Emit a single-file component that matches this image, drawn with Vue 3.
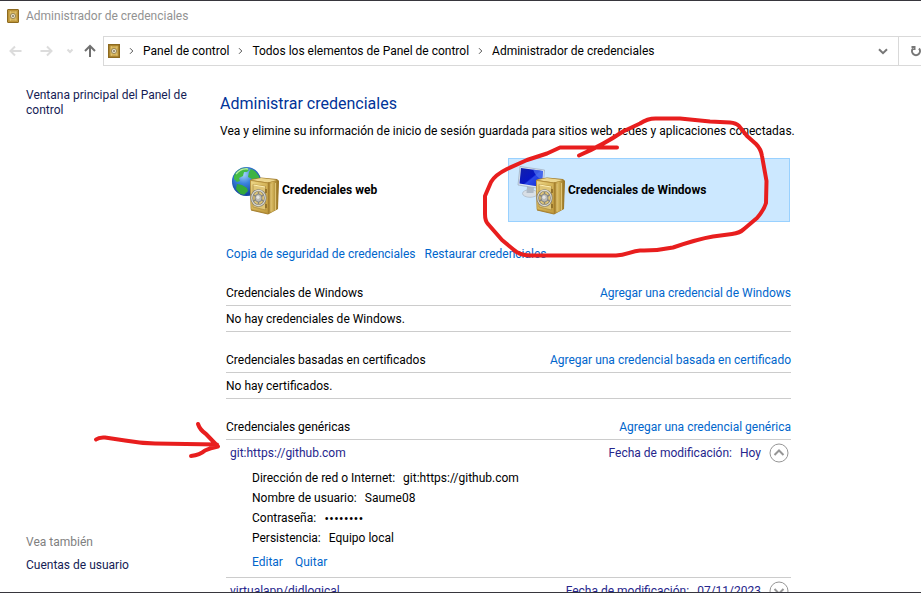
<script setup>
import { ref } from 'vue'

const crumbs = ['Panel de control', 'Todos los elementos de Panel de control', 'Administrador de credenciales']
const selected = ref('windows')
const tiles = [
  { id: 'web', label: 'Credenciales web' },
  { id: 'windows', label: 'Credenciales de Windows' }
]
const emptySections = [
  { title: 'Credenciales de Windows', add: 'Agregar una credencial de Windows', text: 'No hay credenciales de Windows.' },
  { title: 'Credenciales basadas en certificados', add: 'Agregar una credencial basada en certificado', text: 'No hay certificados.' }
]
const credentials = ref([
  {
    name: 'git:https://github.com',
    modified: 'Hoy',
    open: true,
    details: [
      { label: 'Dirección de red o Internet:', value: 'git:https://github.com' },
      { label: 'Nombre de usuario:', value: 'Saume08' },
      { label: 'Contraseña:', value: '••••••••', secret: true },
      { label: 'Persistencia:', value: 'Equipo local' }
    ]
  },
  { name: 'virtualapp/didlogical', modified: '07/11/2023', open: false, details: [] }
])
</script>

<template>
  <div class="window">
    <svg width="0" height="0" class="defs" aria-hidden="true">
      <defs>
        <linearGradient id="gold" x1="0" y1="0" x2="1" y2="1">
          <stop offset="0" stop-color="#efd98a" /><stop offset=".5" stop-color="#d4b458" /><stop offset="1" stop-color="#c09a3c" />
        </linearGradient>
        <linearGradient id="goldSide" x1="0" y1="0" x2="1" y2="0">
          <stop offset="0" stop-color="#9c7524" /><stop offset=".4" stop-color="#d5b65c" /><stop offset="1" stop-color="#94701f" />
        </linearGradient>
        <radialGradient id="sea" cx=".4" cy=".25" r=".8">
          <stop offset="0" stop-color="#a5d5fa" /><stop offset=".4" stop-color="#3b83dc" /><stop offset="1" stop-color="#0c3693" />
        </radialGradient>
        <linearGradient id="screen" x1="0" y1="0" x2="1" y2="1">
          <stop offset="0" stop-color="#1220a8" /><stop offset=".5" stop-color="#0716c4" /><stop offset=".55" stop-color="#2a49e8" /><stop offset="1" stop-color="#1128d0" />
        </linearGradient>
        <symbol id="vault" viewBox="0 0 12 14">
          <rect x=".5" y=".5" width="11" height="13" rx=".5" fill="#c49a38" stroke="#8d6a20" />
          <rect x="2" y="2" width="8" height="10" fill="#d8b65c" stroke="#b08a38" stroke-width=".7" />
          <circle cx="6" cy="7" r="2.600" fill="#e9e0c4" stroke="#8a7748" stroke-width=".8" />
          <circle cx="6" cy="7" r="1.100" fill="#8b8069" />
          <path d="M3 3h1M8.500 3h1M3 11h1M8.500 11h1" stroke="#f5df95" stroke-width=".7" />
        </symbol>
        <symbol id="safe" viewBox="0 0 49 49">
          <path d="M19 14.500Q19 13.500 21 13L30 11.500 46 13 48 15 47 43 37 48.500 20 44.500Z" fill="#a17c2c" />
          <path d="M20 14 30 12l16 2-9 2.500Z" fill="#ecd68d" />
          <path d="M37 16.500 47.500 14.500 46.500 43 37 48Z" fill="url(#goldSide)" />
          <path d="M19.500 14.500 37 17v30.500L20 43.500Z" fill="url(#gold)" stroke="#b08a38" stroke-width=".7" />
          <path d="M22 18.500 34.500 20.500v23.500L22 41Z" fill="#dfc576" stroke="#b08f44" stroke-width=".8" />
          <path d="M22.500 19 34 21" stroke="#fff0b4" />
          <ellipse cx="27.500" cy="32" rx="6.800" ry="7.600" fill="none" stroke="#7c7b74" stroke-width="2.400" />
          <ellipse cx="27.500" cy="32" rx="6.800" ry="7.600" fill="none" stroke="#dedcd2" stroke-width="1.100" />
          <path d="M27.500 26v12M22.500 29l10 6M22.500 35l10-6" stroke="#86857e" stroke-width="1.500" />
          <ellipse cx="27.500" cy="32" rx="3.500" ry="4" fill="#b9b9b4" stroke="#7f7e77" stroke-width=".8" />
          <ellipse cx="27" cy="31.300" rx="1.600" ry="1.800" fill="#e4e4e2" />
          <path d="M35 23v4M35 38v4" stroke="#8a6a26" stroke-width="1.600" />
          <path d="M40 17.500v28M44.500 17v27" stroke="#f0da91" stroke-width=".7" />
        </symbol>
        <symbol id="globe" viewBox="0 0 49 49">
          <circle cx="15.500" cy="15.500" r="14.500" fill="url(#sea)" />
          <path d="M3 9C6 4 11 1 15 2l3 2-2 2-3 0-1 4-4 2 1 3-3 1-3-3Z" fill="#43bb45" />
          <path d="M6 18l5 1 5 3 1 3-4 4-4-1-4-5Z" fill="#35a93a" />
          <path d="M20 3l4 2 4 5 1 6-3 4-4-3-1-4-4-2 1-5Z" fill="#3fb344" />
          <path d="M5 8Q10 2 17 3" fill="none" stroke="#b5ee9f" stroke-width="1.500" />
          <circle cx="15.500" cy="15.500" r="14" fill="none" stroke="#245bae" stroke-opacity=".5" />
        </symbol>
        <symbol id="monitor" viewBox="0 0 49 49">
          <ellipse cx="13" cy="27.500" rx="7.500" ry="3.800" fill="#d8dfe6" stroke="#a9b4c0" stroke-width=".7" />
          <path d="M10 20l7 1-.5 6h-7Z" fill="#aeb9c5" />
          <path d="M3 .5 27.500 4 26 23 1 19Z" fill="#dbe5f0" stroke="#9baabd" stroke-width=".7" />
          <path d="M4 2 26 5 24.500 21 2.500 17.500Z" fill="url(#screen)" />
          <path d="M16 3.600 26 5 25.200 13.500Q19 12 16 3.600Z" fill="#5277ef" opacity=".7" />
        </symbol>
      </defs>
    </svg>

    <header class="title-bar">
      <svg class="vault"><use href="#vault" /></svg>
      <span>Administrador de credenciales</span>
    </header>

    <nav class="address-bar" aria-label="Navegación">
      <div class="history">
        <button aria-label="Atrás" disabled><svg width="14" height="12" viewBox="0 0 14 12"><path d="M12.500 6h-11M6 1.500 1.500 6 6 10.500" /></svg></button>
        <button aria-label="Adelante" disabled><svg width="14" height="12" viewBox="0 0 14 12"><path d="M1.500 6h11M8 1.500 12.500 6 8 10.500" /></svg></button>
        <button class="recent" aria-label="Recientes" disabled><svg width="8" height="6" viewBox="0 0 8 6"><path d="M1.500 1.500 4 4l2.500-2.500" /></svg></button>
        <button class="up" aria-label="Subir"><svg width="12" height="14" viewBox="0 0 12 14"><path d="M6 13V2M1 7 6 2l5 5" /></svg></button>
      </div>
      <div class="location">
        <svg class="vault"><use href="#vault" /></svg>
        <template v-for="crumb in crumbs" :key="crumb">
          <svg class="chevron" width="5" height="8" viewBox="0 0 5 8"><path d="M1 1.200 3.800 4 1 6.800" /></svg>
          <a href="#">{{ crumb }}</a>
        </template>
        <button class="expand" aria-label="Ubicaciones anteriores"><svg width="10" height="7" viewBox="0 0 10 7"><path d="M1 1.200 5 5.200 9 1.200" /></svg></button>
      </div>
      <button class="refresh" aria-label="Actualizar"><svg width="12" height="12" viewBox="0 0 12 12"><path d="M9 3.500A4 4 0 1 1 3 3.500M1.500 2h3v3" /></svg></button>
    </nav>

    <div class="body">
      <aside class="sidebar">
        <a href="#">Ventana principal del Panel de control</a>
        <div class="related">
          <span class="muted">Vea también</span>
          <a href="#">Cuentas de usuario</a>
        </div>
      </aside>

      <main class="content">
        <h1>Administrar credenciales</h1>
        <p class="intro">Vea y elimine su información de inicio de sesión guardada para sitios web, redes y aplicaciones conectadas.</p>

        <div class="tiles">
          <button v-for="tile in tiles" :key="tile.id" class="tile" :class="{ selected: selected === tile.id }" @click="selected = tile.id">
            <svg class="tile-icon" viewBox="0 0 49 49">
              <use :href="tile.id === 'web' ? '#globe' : '#monitor'" />
              <use href="#safe" />
            </svg>
            <span>{{ tile.label }}</span>
          </button>
        </div>

        <div class="lists">
          <div class="backup">
            <a href="#" class="action">Copia de seguridad de credenciales</a>
            <a href="#" class="action">Restaurar credenciales</a>
          </div>

          <section v-for="section in emptySections" :key="section.title">
            <div class="section-head"><h2>{{ section.title }}</h2><a href="#" class="action">{{ section.add }}</a></div>
            <p class="empty">{{ section.text }}</p>
          </section>

          <section>
            <div class="section-head"><h2>Credenciales genéricas</h2><a href="#" class="action">Agregar una credencial genérica</a></div>
            <article v-for="item in credentials" :key="item.name" class="credential">
              <button class="summary" :aria-expanded="item.open" @click="item.open = !item.open">
                <span class="name">{{ item.name }}</span>
                <span>Fecha de modificación:</span>
                <span>{{ item.modified }}</span>
                <svg width="20" height="20" viewBox="0 0 20 20">
                  <circle cx="10" cy="10" r="9" />
                  <path :d="item.open ? 'M5.500 12 10 7.500 14.500 12' : 'M5.500 8 10 12.500 14.500 8'" />
                </svg>
              </button>
              <div v-if="item.open" class="details">
                <dl>
                  <div v-for="row in item.details" :key="row.label"><dt>{{ row.label }}</dt><dd :class="{ secret: row.secret }">{{ row.value }}</dd></div>
                </dl>
                <div class="edit"><a href="#" class="action">Editar</a><a href="#" class="action">Quitar</a></div>
              </div>
            </article>
          </section>
        </div>
      </main>
    </div>

    <svg class="marks" width="921" height="593" viewBox="0 0 921 593" aria-hidden="true">
      <path d="M617 147.500H560L547 153.500 527 160 507 169Q495 175 491 182L485 196V214Q485 221 488 224L502 240 514 250Q519 255 530 255.500H616C627 255 631 251 640 250.500Q656 251 673 247.500 698 239 713 236.500L732 234Q740 233 744 229L757 218Q764 210 766 203L766.500 181 762 156Q761 149 756 144L747 136 739 126Q736 123 730 122.500L710 121.500 680 118.500H657Q648 118 640 123.500L623 131.500Q603 145 579 155.500" />
      <path d="M96 439.500Q99 437 105 437.500L125 440.500Q139 443 155 443.500L217 444.500M198 424Q200 430 206 434L218 446.500Q210 448 205 450.500 200 455 191 456" />
    </svg>
  </div>
</template>

<style>
body { margin: 0; }
</style>

<style scoped>
* { box-sizing: border-box; }
.window {
  position: relative;
  display: flex;
  flex-direction: column;
  height: 100vh;
  overflow: hidden;
  background: #fff;
  border-top: 1px solid #37363d;
  border-bottom: 1px solid #37363d;
  color: #000;
  font: 12px/16px "Segoe UI", Roboto, "Noto Sans", sans-serif;
}
.defs { position: absolute; }
a { color: inherit; text-decoration: none; }
a:hover { text-decoration: underline; }
button { padding: 0; border: 0; background: none; color: inherit; font: inherit; }
h1, h2, p, dl, dd { margin: 0; font-weight: 400; }
svg { flex: none; display: block; }

.title-bar { display: flex; align-items: center; gap: 7px; height: 29px; padding-left: 7px; color: #929292; }
.vault { width: 12px; height: 14px; }

.address-bar { display: flex; flex: none; height: 30px; margin-top: 6px; }
.address-bar svg { fill: none; stroke: #777; stroke-width: 2; }
.address-bar .vault { stroke: none; }
.history { display: flex; align-items: center; width: 103px; padding-left: 9px; gap: 16px; }
.history svg { stroke: #dcdcdc; }
.history .recent { margin-right: -6px; margin-left: -3px; }
.history .up svg { stroke: #707070; }
.location { display: flex; flex: 1; align-items: center; min-width: 0; padding: 0 10px 0 4px; border: 1px solid #d9d9d9; white-space: nowrap; }
.address-bar .chevron { margin: 0 9px; stroke: #555; stroke-width: 1; }
.expand { margin-left: auto; }
.refresh { display: flex; align-items: center; width: 22px; padding-left: 11px; border: solid #d9d9d9; border-width: 1px 0; overflow: hidden; }

.body { display: flex; flex: 1; min-height: 0; }
.sidebar { display: flex; flex: none; flex-direction: column; width: 220px; padding: 22px 30px 19px 26px; color: #151c55; line-height: 15px; }
.related { display: flex; flex-direction: column; gap: 8px; margin-top: auto; }
.muted { color: #808080; }

.content { flex: 1; min-width: 0; padding: 26px 130px 0 0; }
h1 { color: #003399; font-size: 16px; line-height: 24px; }
.intro { margin-top: 7px; line-height: 16px; white-space: nowrap; }
.tiles { display: grid; grid-template-columns: 1fr 1fr; gap: 4px; margin: 19px 1px 0 2px; }
.tile { display: flex; align-items: center; gap: 2px; height: 64px; padding-left: 8px; border: 1px solid transparent; font-weight: 700; text-align: left; }
.tile.selected { border-color: #99d1ff; background: #cce8ff; }
.tile-icon { width: 49px; height: 49px; }

.lists { padding-left: 6px; }
.action { color: #0066cc; }
.backup { display: flex; gap: 9px; margin: 24px 0 18px; }
section + section { margin-top: 15px; }
.section-head { display: flex; align-items: center; justify-content: space-between; height: 26px; border-bottom: 1px solid #ccc; }
h2 { font-size: 12px; }
.empty { height: 26px; border-bottom: 1px solid #ccc; line-height: 27px; }
.credential + .credential { border-top: 1px solid #ccc; }
.summary { display: flex; align-items: center; gap: 8px; width: 100%; height: 25px; padding: 0 2px 0 4px; color: #26268c; }
.summary .name { margin-right: auto; }
.summary svg { fill: none; stroke: #969696; stroke-width: 1; }
.summary path { stroke-width: 2; }
.details { padding: 3px 0 5px 26px; }
dl div { display: flex; gap: 8px; line-height: 20px; }
.secret { font-family: "Open Sans", sans-serif; font-size: 13px; }
.edit { display: flex; gap: 12px; margin-top: 4px; line-height: 20px; }

.marks { position: absolute; top: -1px; left: 0; fill: none; stroke: #e81e1e; stroke-width: 4; stroke-linecap: round; stroke-linejoin: round; pointer-events: none; }
</style>
